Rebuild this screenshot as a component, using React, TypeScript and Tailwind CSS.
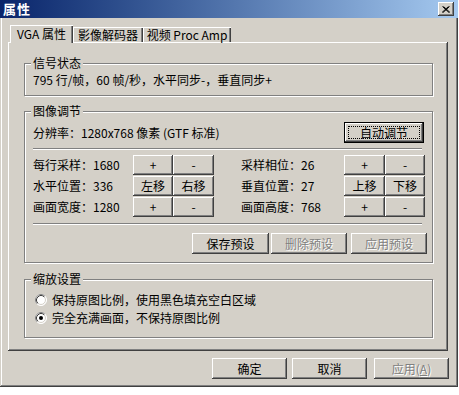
import type { ReactNode } from 'react'

const raised =
  'shadow-[inset_-1px_-1px_#404040,inset_1px_1px_#ffffff,inset_-2px_-2px_#808080,inset_2px_2px_#d4d0c8]'

function Btn({
  w,
  children,
  disabled = false,
  className = '',
}: {
  w: string
  children: ReactNode
  disabled?: boolean
  className?: string
}) {
  return (
    <div
      className={`${w} h-full shrink-0 flex items-center justify-center bg-[#d4d0c8] ${raised} ${className} ${
        disabled ? 'text-[#808080] [text-shadow:1px_1px_0_#ffffff]' : 'text-black'
      }`}
    >
      {children}
    </div>
  )
}

function DefaultBtn({ children }: { children: ReactNode }) {
  return (
    <div className="w-[80px] h-[21px] border border-black bg-[#d4d0c8] shadow-[inset_-1px_-1px_#404040,inset_1px_1px_#ffffff,inset_-2px_-2px_#808080] p-[3px]">
      <div className="h-full border border-dotted border-black flex items-center justify-center">
        {children}
      </div>
    </div>
  )
}

function Group({
  label,
  className = '',
  children,
}: {
  label: string
  className?: string
  children: ReactNode
}) {
  return (
    <div
      className={`relative w-[409px] border border-[#808080] shadow-[inset_1px_1px_#ffffff,1px_1px_#ffffff] ${className}`}
    >
      <span className="absolute left-[6px] top-[-8px] px-[2px] bg-[#d4d0c8] leading-[14px]">
        {label}
      </span>
      {children}
    </div>
  )
}

function Sep({ className = '' }: { className?: string }) {
  return <div className={`h-0 border-t border-b border-t-[#808080] border-b-white ${className}`} />
}

function Radio({ checked }: { checked?: boolean }) {
  return (
    <svg width="12" height="12" viewBox="0 0 12 12" className="shrink-0">
      <circle cx="6" cy="6" r="5.5" fill="#ffffff" stroke="#ffffff" />
      <path d="M2.11 9.89 A5.5 5.5 0 0 1 9.89 2.11" fill="none" stroke="#808080" />
      <circle cx="6" cy="6" r="4.5" fill="#ffffff" stroke="#d4d0c8" />
      <path d="M2.82 9.18 A4.5 4.5 0 0 1 9.18 2.82" fill="none" stroke="#404040" />
      {checked && <circle cx="6" cy="6" r="2" fill="#000000" />}
    </svg>
  )
}

function AdjustRow({
  l,
  r,
  lb,
  rb,
}: {
  l: string
  r: string
  lb: [string, string]
  rb: [string, string]
}) {
  return (
    <div className="flex h-[20px] items-center pl-[8px]">
      <span className="w-[100px] shrink-0 whitespace-nowrap">{l}</span>
      <Btn w="w-[40px]">{lb[0]}</Btn>
      <Btn w="w-[41px]">{lb[1]}</Btn>
      <span className="w-[27px] shrink-0" />
      <span className="w-[103px] shrink-0 whitespace-nowrap">{r}</span>
      <Btn w="w-[41px]">{rb[0]}</Btn>
      <Btn w="w-[40px]">{rb[1]}</Btn>
    </div>
  )
}

export default function App() {
  return (
    <div className="w-[459px] h-[395px] bg-white font-['Noto_Sans_CJK_SC',sans-serif] text-[12px] leading-[14px] text-black">
      <div className="w-[458px] h-[387px] bg-[#d4d0c8] flex flex-col shadow-[inset_-1px_-1px_#404040,inset_1px_1px_#d4d0c8,inset_-2px_-2px_#808080,inset_2px_2px_#ffffff]">
        {/* title bar */}
        <div className="h-[18px] flex items-center justify-between pl-[3px] pr-[4px] bg-gradient-to-r from-[#0a246a] to-[#a6caf0]">
          <span className="text-white font-bold text-[13px] tracking-[1px]">属性</span>
          <div className={`w-[16px] h-[14px] bg-[#d4d0c8] ${raised} flex items-center justify-center`}>
            <svg width="8" height="7" viewBox="0 0 8 7">
              <path d="M0.5 0.5 L7 6.5 M1.5 0.5 L8 6.5 M6.5 0.5 L0 6.5 M7.5 0.5 L1 6.5" stroke="#000" strokeWidth="1" />
            </svg>
          </div>
        </div>

        {/* tabs + panel */}
        <div className="pl-[8px]">
          <div className="h-[24px] flex items-end pl-[2px]">
            <div className="relative z-10 -mb-px w-[63px] h-[18px] bg-[#d4d0c8] pl-[7px] pt-[2px] whitespace-nowrap shadow-[inset_1px_1px_#ffffff,inset_-1px_0_#404040,inset_-2px_0_#808080]">
              VGA 属性
            </div>
            <div className="w-[70px] h-[15px] bg-[#d4d0c8] flex items-center justify-center whitespace-nowrap shadow-[inset_1px_1px_#ffffff,inset_-1px_0_#404040,inset_-2px_0_#808080]">
              影像解码器
            </div>
            <div className="w-[88px] h-[15px] bg-[#d4d0c8] flex items-center justify-center whitespace-nowrap shadow-[inset_1px_1px_#ffffff,inset_-1px_0_#404040,inset_-2px_0_#808080]">
              视频 Proc Amp
            </div>
          </div>

          <div className="w-[440px] h-[309px] flex flex-col pl-[16px] pt-[21px] shadow-[inset_-1px_-1px_#404040,inset_1px_1px_#ffffff,inset_-2px_-2px_#808080]">
            <Group label="信号状态" className="h-[33px] flex items-center pl-[8px]">
              <span className="whitespace-nowrap">795 行/帧，60 帧/秒，水平同步-，垂直同步+</span>
            </Group>

            <Group label="图像调节" className="mt-[15px] h-[152px] pt-[10px]">
              <div className="h-[21px] flex items-center justify-between pl-[8px] pr-[8px]">
                <span className="whitespace-nowrap">分辨率：1280x768 像素 (GTF 标准)</span>
                <DefaultBtn>自动调节</DefaultBtn>
              </div>
              <Sep className="mt-[5px] ml-[8px] mr-[10px]" />
              <div className="mt-[5px] flex flex-col gap-[1px]">
                <AdjustRow l="每行采样：1680" r="采样相位：26" lb={['+', '-']} rb={['+', '-']} />
                <AdjustRow l="水平位置：336" r="垂直位置：27" lb={['左移', '右移']} rb={['上移', '下移']} />
                <AdjustRow l="画面宽度：1280" r="画面高度：768" lb={['+', '-']} rb={['+', '-']} />
              </div>
              <Sep className="mt-[6px] ml-[8px] mr-[10px]" />
              <div className="mt-[8px] h-[21px] flex justify-end pr-[5px]">
                <Btn w="w-[77px]">保存预设</Btn>
                <Btn w="w-[76px]" className="ml-[2px]" disabled>
                  删除预设
                </Btn>
                <Btn w="w-[76px]" className="ml-[4px]" disabled>
                  应用预设
                </Btn>
              </div>
            </Group>

            <Group label="缩放设置" className="mt-[16px] h-[59px] pt-[11px] pl-[10px]">
              <div className="h-[18px] flex items-center gap-[5px]">
                <Radio />
                <span className="whitespace-nowrap">保持原图比例，使用黑色填充空白区域</span>
              </div>
              <div className="h-[18px] flex items-center gap-[5px]">
                <Radio checked />
                <span className="whitespace-nowrap">完全充满画面，不保持原图比例</span>
              </div>
            </Group>
          </div>
        </div>

        {/* footer */}
        <div className="mt-[7px] h-[21px] flex justify-end pr-[9px]">
          <Btn w="w-[75px]">确定</Btn>
          <Btn w="w-[75px]" className="ml-[5px]">
            取消
          </Btn>
          <Btn w="w-[75px]" className="ml-[7px]" disabled>
            应用(<span className="underline">A</span>)
          </Btn>
        </div>
      </div>
    </div>
  )
}
